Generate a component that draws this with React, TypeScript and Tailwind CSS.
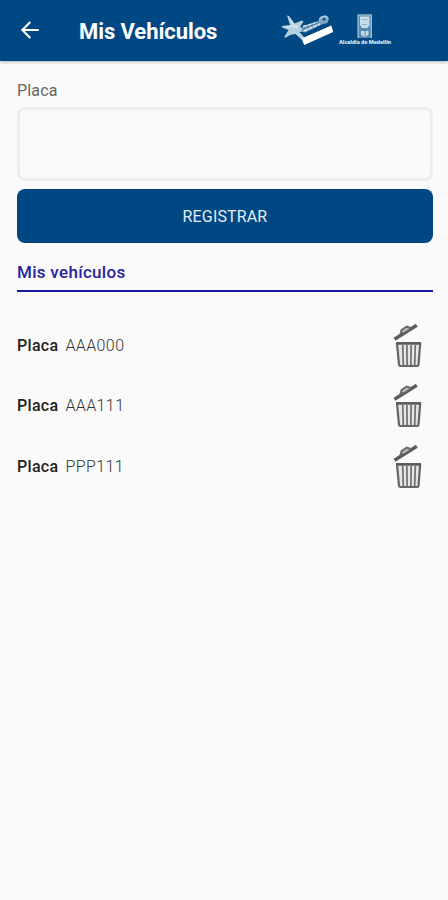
import { useState } from "react";

const initialPlates = ["AAA000", "AAA111", "PPP111"];

function BackArrow() {
  return (
    <svg width="20" height="20" viewBox="0 0 20 20" fill="none" stroke="#fff" strokeWidth="2">
      <path d="M18.8 10H3M10.3 2 2.3 10l8 8" />
    </svg>
  );
}

function ParkingLogo() {
  return (
    <svg width="54" height="36" viewBox="0 0 54 36" aria-hidden="true">
      <path
        d="M6 2.5 8 3l5.5 7.5L21 7.5l1.5 1-3.5 5.5 6 2.5-1 2-5.5.5 4 4.5 1 4-3.5-1.5-5.5-5-5.5 1-5 3-.5-1.5L7.5 17 1 14.5v-1.5l8-1Z"
        fill="#b5d0e0"
      />
      <path d="m22 13 15-4.5 2-4.5 5.5-1.5 3.5 3-1.5 4.5-6 1.5-16 8-5-1z" fill="#7da6c3" />
      <path
        d="m22 13.5 15-4.5M23 18l16-7"
        stroke="#d8e8f1"
        strokeWidth="1.4"
        strokeDasharray="4 1"
      />
      <path d="m22 16 16-6.5" stroke="#2b6593" strokeWidth="1" strokeDasharray="3 1" />
      <path d="M38.5 6.5q1-3 5-3.5 3 0 3.5 2.5" fill="none" stroke="#c6dce9" strokeWidth="1.2" />
      <circle cx="43" cy="6.3" r="1.5" fill="#1e5a8e" />
      <path d="m5 14 13-1M9 6l7 10" stroke="#e0edf4" strokeWidth="1" />
      <path d="M20.5 25.5 50.3 12.5l1.9 6.5L23.2 32Z" fill="#fff" />
    </svg>
  );
}

function CityLogo() {
  return (
    <svg width="54" height="36" viewBox="0 0 54 36" aria-hidden="true">
      <path d="M19.5 1.5H34V25H19.5z" fill="#568ab3" />
      <path d="M20.2 1.5V25M33.3 1.5V25M20 2h13" stroke="#a9c9de" strokeWidth="1.1" />
      <path d="M22 3.5h9.5v8.5l-2 3h-5.5l-2-3z" fill="#c6dce9" />
      <path d="M24 6.5h5.5M24 11.5h5" stroke="#8fb3cb" strokeWidth="1" />
      <path d="M23 18h7.5v3.5l-3.7 3-3.8-3z" fill="#c6dce9" />
      <path d="M27 17v7" stroke="#4d82ad" strokeWidth="1" />
      <text
        x="1"
        y="31"
        textLength="52"
        lengthAdjust="spacingAndGlyphs"
        fill="#dceaf3"
        fontFamily="Roboto, sans-serif"
        fontSize="5.8"
        fontWeight="900"
      >
        Alcaldía de Medellín
      </text>
    </svg>
  );
}

function OpenTrash() {
  return (
    <svg width="30" height="46" viewBox="0 0 30 46" fill="none" aria-hidden="true">
      <path d="M1.5 16.3 23.8 2.3" stroke="#5c5c5c" strokeWidth="3.4" />
      <path
        d="m7.6 11.2 1-4 5.2-3.5 4 1.4"
        stroke="#6b6b6b"
        strokeWidth="2.2"
        strokeLinejoin="round"
      />
      <path d="m10 9 5.6-3.5" stroke="#aaa" strokeWidth="2" />
      <path
        d="M4 20.3h23.2l-1.7 21.4q-.1 1.3-1.4 1.3H7.4q-1.3 0-1.4-1.3Z"
        fill="#e6e6e6"
        stroke="#666"
        strokeWidth="2.2"
        strokeLinejoin="round"
      />
      <path d="M3 20.3h25" stroke="#5c5c5c" strokeWidth="2.4" />
      <path
        d="m9.7 22 .6 20M13.9 22l.2 20M18.1 22l-.2 20M22.3 22l-.6 20"
        stroke="#707070"
        strokeWidth="1.7"
      />
    </svg>
  );
}

function VehicleRow({ plate, onDelete }: { plate: string; onDelete: () => void }) {
  return (
    <li className="flex h-[60.5px] items-center justify-between pr-[10px]">
      <div className="flex gap-[7px] text-base">
        <span className="font-medium tracking-[0.3px] text-[#222]">Placa</span>
        <span className="font-light tracking-[0.4px] text-[#333]">{plate}</span>
      </div>
      <button type="button" aria-label={`Eliminar ${plate}`} onClick={onDelete}>
        <OpenTrash />
      </button>
    </li>
  );
}

export default function App() {
  const [plates, setPlates] = useState(initialPlates);
  const [value, setValue] = useState("");

  const register = () => {
    const plate = value.trim().toUpperCase();
    if (!plate || plates.includes(plate)) return;
    setPlates([...plates, plate]);
    setValue("");
  };

  return (
    <div className="min-h-screen bg-[#fafafa] font-['Roboto',sans-serif]">
      <header className="flex h-[61px] items-center bg-[#004884] pl-5 shadow-[0_1px_3px_rgba(0,0,0,0.3)]">
        <button type="button" aria-label="Volver" className="pb-0.5">
          <BackArrow />
        </button>
        <h1 className="ml-[39px] w-[202px] pt-0.5 text-[22px] font-bold tracking-[-0.08px] text-white">
          Mis Vehículos
        </h1>
        <ParkingLogo />
        <div className="ml-[3px]">
          <CityLogo />
        </div>
      </header>

      <main className="pr-[15px] pl-[17px]">
        <label
          htmlFor="plate"
          className="block pt-[18px] text-base leading-6 tracking-[0.15px] text-[#666]"
        >
          Placa
        </label>
        <input
          id="plate"
          value={value}
          onChange={(e) => setValue(e.target.value)}
          className="mt-1 block h-[74px] w-full rounded-lg border-[3px] border-[#eeeeee] px-3 outline-none"
        />
        <button
          type="button"
          onClick={register}
          className="mt-[7.5px] block h-[54px] w-full rounded-lg bg-[#004884] pt-0.5 text-base tracking-[0.15px] text-[#e4edf4]"
        >
          REGISTRAR
        </button>

        <h2 className="mt-[17px] h-[32.5px] border-b-2 border-[#1717a0] text-[17px] leading-6 font-medium tracking-[0.3px] text-[#2525a0]">
          Mis vehículos
        </h2>

        <ul className="mt-[23.5px]">
          {plates.map((plate) => (
            <VehicleRow
              key={plate}
              plate={plate}
              onDelete={() => setPlates(plates.filter((p) => p !== plate))}
            />
          ))}
        </ul>
      </main>
    </div>
  );
}
